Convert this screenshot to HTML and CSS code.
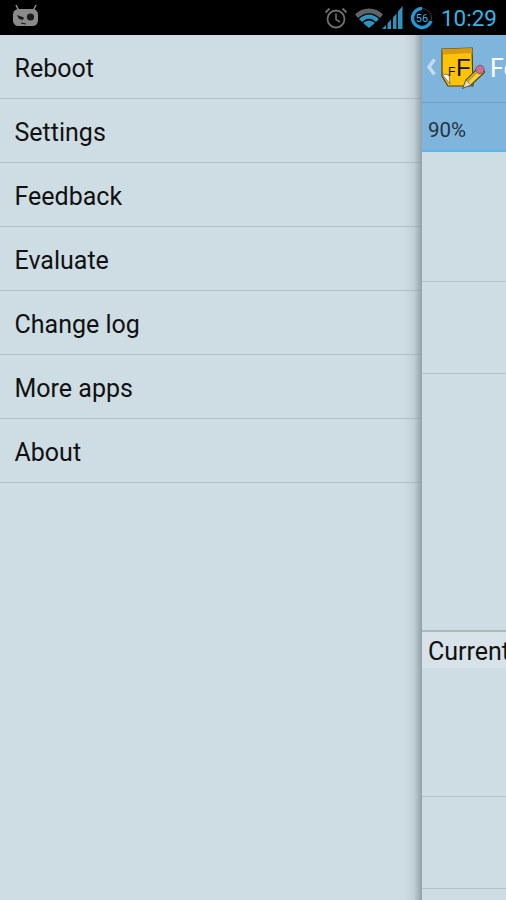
FILE: index.html
```html
<!DOCTYPE html>
<html lang="en">
<head>
    <meta charset="UTF-8">
    <meta name="viewport" content="width=device-width, initial-scale=1.0">
    <title>Settings</title>
    <link rel="stylesheet" href="styles.css">
</head>
<body>
    <div class="status-bar">
        <svg class="cm-logo" width="28" height="24" viewBox="0 0 28 24">
            <path d="M4 1l3 6M24 1l-3 6" stroke="#8a8a8a" stroke-width="1.6"/>
            <rect x="1" y="5" width="25" height="17" rx="5.5" fill="#8a8a8a"/>
            <path d="M5 11l7 2.5-1 2.5-4-1z" fill="#1c1c1c"/>
            <circle cx="18.5" cy="13" r="3.6" fill="#1c1c1c"/>
            <path d="M9 19l5 1" stroke="#1c1c1c" stroke-width="1.2"/>
        </svg>
        <div class="status-icons">
            <svg class="alarm" width="24" height="24" viewBox="0 0 24 24" fill="none" stroke="#6f6f6f">
                <circle cx="12" cy="13" r="8.5" stroke-width="1.8"/>
                <path d="M12 7.5v6l4 2.5" stroke-width="1.6"/>
                <path d="M1.5 6.5l4-4M22.5 6.5l-4-4" stroke-width="1.8"/>
            </svg>
            <svg class="wifi" width="28" height="20" viewBox="0 0 28 20">
                <path d="M0 6.500C7-1.500 21-1.500 28 6.500l-3 3.500C18 3.500 10 3.500 3 10z" fill="#5e6468"/>
                <path d="M4 11C10 5 18 5 24 11l-3 3C16 9.500 12 9.500 7 14z" fill="#2f93bd"/>
                <path d="M8 15C11.500 11.500 16.500 11.500 20 15l-6 5z" fill="#2f93bd"/>
            </svg>
            <svg class="signal" width="21" height="23" viewBox="0 0 21 23" fill="#2f93bd">
                <path d="M0 23l4-4v4zM5.500 23v-5.500l3.500-4V23zM11 23V11.500l3.500-4V23zM16 23V5.500L20.500 0v23z"/>
            </svg>
            <svg class="battery" width="24" height="24" viewBox="0 0 24 24" fill="none">
                <circle cx="12" cy="12" r="9.500" stroke="#3a3a3a" stroke-width="1"/>
                <path d="M12 2.500A9.500 9.500 0 1 0 21 15" stroke="#1f9ad6" stroke-width="3.400"/>
                <text x="12" y="16" class="battery-text">56</text>
            </svg>
            <span class="clock">10:29</span>
        </div>
    </div>

    <div class="screen">
        <ul class="drawer">
            <li class="drawer-item">Reboot</li>
            <li class="drawer-item">Settings</li>
            <li class="drawer-item">Feedback</li>
            <li class="drawer-item">Evaluate</li>
            <li class="drawer-item">Change log</li>
            <li class="drawer-item">More apps</li>
            <li class="drawer-item">About</li>
        </ul>

        <div class="panel">
            <div class="action-bar">
                <svg class="back" width="10" height="20" viewBox="0 0 10 20">
                    <path d="M8.500 2.500L3 10l5.500 7.500" fill="none" stroke="#c6dcee" stroke-width="3.500"/>
                </svg>
                <svg class="app-icon" width="46" height="46" viewBox="0 0 46 46">
                    <path d="M3 3l30-1 1 38-25 0-6-10z" fill="#fdc309" stroke="#4f4310" stroke-width="1.200"/>
                    <path d="M3 3l30-1 .3 5-29 1.500z" fill="#d99a10"/>
                    <path d="M3 28l7 1 1 9z" fill="#fff" stroke="#555" stroke-width=".7"/>
                    <text x="9" y="30" class="icon-small">F</text>
                    <text x="17" y="30" class="icon-big">F</text>
                    <path d="M24 42l3-8 13-13 6 5-14 13z" fill="#f5cf3a" stroke="#4f4310" stroke-width="1.200"/>
                    <path d="M28 36l12-12" stroke="#b8921c" stroke-width="1.200"/>
                    <circle cx="41" cy="23.500" r="4.200" fill="#c9708c" stroke="#7a4656" stroke-width=".8"/>
                    <path d="M24 42l3-8 5 5z" fill="#e8dcc0" stroke="#666" stroke-width=".7"/>
                </svg>
                <span class="app-title">Fo</span>
            </div>
            <div class="progress-row">90%</div>
            <div class="block block-a"></div>
            <div class="block block-b"></div>
            <div class="block block-c"></div>
            <div class="section-title">Current</div>
            <div class="block block-d"></div>
            <div class="block block-e"></div>
        </div>
    </div>
</body>
</html>
```

FILE: styles.css
```css
* {
    box-sizing: border-box;
}

html, body {
    margin: 0;
    height: 100%;
}

body {
    width: 506px;
    height: 900px;
    overflow: hidden;
    background-color: #cedce3;
    font-family: 'Roboto', sans-serif;
    display: flex;
    flex-direction: column;
}

.status-bar {
    flex: 0 0 35px;
    background-color: #000;
    display: flex;
    justify-content: space-between;
    align-items: center;
    padding: 0 9px 0 12px;
}

.cm-logo {
    margin-top: -4px;
}

.status-icons {
    display: flex;
    align-items: center;
}

.alarm {
    margin-right: 7px;
}

.wifi {
    margin-right: -1px;
}

.signal {
    margin-right: 7px;
    margin-top: -1px;
}

.battery {
    margin-right: 7px;
}

.battery-text {
    font-family: 'Roboto', sans-serif;
    font-size: 11px;
    text-anchor: middle;
    fill: #3bb2e8;
}

.clock {
    font-size: 22.5px;
    color: #33b5e5;
}

.screen {
    flex: 1;
    display: flex;
    min-height: 0;
}

.drawer {
    flex: 0 0 422px;
    margin: 0;
    padding: 0;
    list-style: none;
    position: relative;
    background-color: #cedce3;
}

/* shadow the drawer throws at its edge */
.drawer::after {
    content: "";
    position: absolute;
    top: 0;
    right: 0;
    bottom: 0;
    width: 18px;
    background: linear-gradient(to right, rgba(150, 165, 172, 0), rgba(150, 165, 172, .25) 55%, rgba(130, 145, 152, .8));
}

.drawer-item {
    height: 64px;
    padding: 4px 0 0 14.5px;
    display: flex;
    align-items: center;
    font-size: 25px;
    color: #111;
    border-bottom: 1px solid #b2c0c7;
}

.panel {
    flex: 1;
    min-width: 0;
    overflow: hidden;
    white-space: nowrap;
}

.action-bar {
    height: 68px;
    background-color: #7fb5dc;
    border-bottom: 1px solid #6f9fc2;
    display: flex;
    align-items: center;
    padding-left: 4px;
}

.back {
    flex: none;
    margin-top: -4px;
}

.app-icon {
    flex: none;
    margin-left: 3px;
}

.app-title {
    margin-left: 5px;
    font-size: 25px;
    color: #fff;
}

.progress-row {
    height: 49px;
    background-color: #7fb5dc;
    border-bottom: 2px solid #5fb6e6;
    padding: 15px 0 0 6px;
    font-size: 20.5px;
    color: #26343c;
}

.block {
    border-bottom: 1px solid #b2c0c7;
}

.block-a {
    height: 130px;
}

.block-b {
    height: 92px;
}

.block-c {
    height: 258px;
    border-bottom: 2px solid #adb8be;
}

.section-title {
    height: 36px;
    background-color: #d8e3e9;
    padding: 5px 0 0 6px;
    font-size: 25px;
    color: #111;
}

.block-d {
    height: 129px;
}

.block-e {
    height: 92px;
}

.icon-small {
    font-family: 'Liberation Sans', sans-serif;
    font-size: 12px;
    fill: #111;
}

.icon-big {
    font-family: 'Liberation Sans', sans-serif;
    font-size: 24px;
    fill: #111;
}
```
